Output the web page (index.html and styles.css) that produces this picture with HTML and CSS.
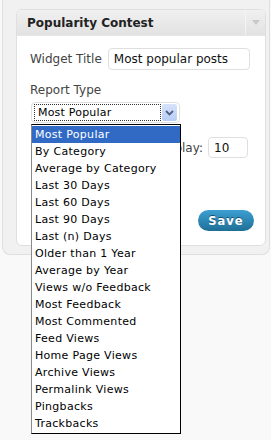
FILE: index.html
```html
<!DOCTYPE html>
<html lang="en">
<head>
  <meta charset="UTF-8" />
  <title>Popularity Contest widget</title>
  <meta name="viewport" content="width=device-width, initial-scale=1.0" />
  <link rel="stylesheet" href="styles.css">
</head>
<body>
  <div class="sidebar">
    <div class="widget">
      <!-- Widget header -->
      <div class="widget-top">
        <h4 class="widget-title">Popularity Contest</h4>
        <div class="widget-toggle"><span class="arrow"></span></div>
      </div>

      <!-- Widget form -->
      <div class="widget-inside">
        <div class="row">
          <label class="label">Widget Title</label>
          <input class="field field-title" type="text" value="Most popular posts" />
        </div>

        <div class="label report-label">Report Type</div>
        <div class="select">
          <span class="select-value">Most Popular</span>
          <span class="select-btn">
            <svg width="9" height="6" viewBox="0 0 9 6"><path d="M1 1 L4.5 4.5 L8 1" fill="none" stroke="#4d6185" stroke-width="1.8"/></svg>
          </span>
        </div>

        <div class="row row-count">
          <label class="label">Number of posts to display:</label>
          <input class="field field-count" type="text" value="10" />
        </div>

        <div class="actions">
          <button class="btn-save">Save</button>
        </div>
      </div>
    </div>
  </div>

  <!-- Open dropdown list -->
  <ul class="dropdown">
    <li class="selected">Most Popular</li>
    <li>By Category</li>
    <li>Average by Category</li>
    <li>Last 30 Days</li>
    <li>Last 60 Days</li>
    <li>Last 90 Days</li>
    <li>Last (n) Days</li>
    <li>Older than 1 Year</li>
    <li>Average by Year</li>
    <li>Views w/o Feedback</li>
    <li>Most Feedback</li>
    <li>Most Commented</li>
    <li>Feed Views</li>
    <li>Home Page Views</li>
    <li>Archive Views</li>
    <li>Permalink Views</li>
    <li>Pingbacks</li>
    <li>Trackbacks</li>
  </ul>
</body>
</html>
```

FILE: styles.css
```css
* {
  box-sizing: border-box;
}

body {
  margin: 0;
  background: #f9f9f9;
  font-family: 'DejaVu Sans', Verdana, sans-serif;
  color: #333;
  position: relative;
  height: 440px;
  overflow: hidden;
}

.sidebar {
  margin-left: 2px;
  width: 268px;
  padding: 9px 3px 8px 13px;
  background: #f1f1f1;
  border: 1px solid #dfdfdf;
  border-top: 0;
  border-radius: 0 0 8px 8px;
}

.widget {
  background: #fff;
  border: 1px solid #dfdfdf;
  border-radius: 6px;
  overflow: hidden;
}

.widget-top {
  display: flex;
  height: 26px;
  background: linear-gradient(to bottom, #f0f0f0, #e2e2e2);
  border-bottom: 1px solid #e6e6e6;
}

.widget-title {
  flex: 1;
  margin: 0;
  padding-left: 10px;
  font-size: 12px;
  line-height: 26px;
  font-weight: bold;
  color: #222;
}

.widget-toggle {
  width: 20px;
  border-left: 1px solid #f4f4f4;
  display: flex;
  align-items: center;
  justify-content: center;
}

.arrow {
  width: 0;
  height: 0;
  border-left: 4px solid transparent;
  border-right: 4px solid transparent;
  border-top: 5px solid #c8c8c8;
}

.widget-inside {
  padding: 12px 11px 14px 13px;
}

.row {
  display: flex;
  align-items: center;
}

.label {
  font-size: 12px;
  color: #444;
}

.field {
  height: 22px;
  border: 1px solid #dfdfdf;
  border-radius: 4px;
  font-family: 'DejaVu Sans', Verdana, sans-serif;
  font-size: 12px;
  color: #111;
  padding: 0 5px;
  background: #fff;
}

.field-title {
  width: 142px;
  margin-left: 6px;
}

.report-label {
  margin-top: 13px;
  line-height: 14px;
}

.select {
  display: flex;
  align-items: center;
  width: 149px;
  height: 21px;
  margin: 5px 0 0 1px;
  padding: 1px 2px;
  border: 1px solid #dfdfdf;
  border-radius: 4px;
}

.select-value {
  flex: 1;
  height: 17px;
  border: 1px dotted #333;
  font-size: 11px;
  line-height: 15px;
  padding-left: 3px;
  letter-spacing: 0.2px;
  color: #000;
}

.select-btn {
  width: 15px;
  height: 17px;
  margin-left: 1px;
  background: linear-gradient(to bottom, #d6e3fb, #b7cdf5);
  border-radius: 2px;
  display: flex;
  align-items: center;
  justify-content: center;
}

.row-count {
  justify-content: flex-end;
  margin-top: 14px;
  padding-right: 6px;
  white-space: nowrap;
}

.field-count {
  width: 40px;
  height: 21px;
  margin-left: 5px;
}

.actions {
  display: flex;
  justify-content: flex-end;
  margin-top: 52px;
}

.btn-save {
  width: 56px;
  height: 21px;
  border: 0;
  border-radius: 11px;
  background: linear-gradient(to bottom, #3c9fd2, #1f6f97);
  color: #fff;
  font-family: 'DejaVu Sans', Verdana, sans-serif;
  font-weight: bold;
  font-size: 11.5px;
  letter-spacing: 1px;
  text-shadow: 0 -1px 0 #164f6e;
  cursor: pointer;
}

.dropdown {
  position: absolute;
  left: 31px;
  top: 124px;
  width: 150px;
  margin: 0;
  padding: 1px 0;
  list-style: none;
  background: #fff;
  border: 1px solid #000;
  border-left-color: #8a8a8a;
}

.dropdown li {
  height: 17px;
  line-height: 17px;
  padding-left: 3px;
  font-size: 11px;
  letter-spacing: 0.3px;
  color: #000;
  white-space: nowrap;
}

.dropdown .selected {
  background: #316ac5;
  color: #fff;
}
```
